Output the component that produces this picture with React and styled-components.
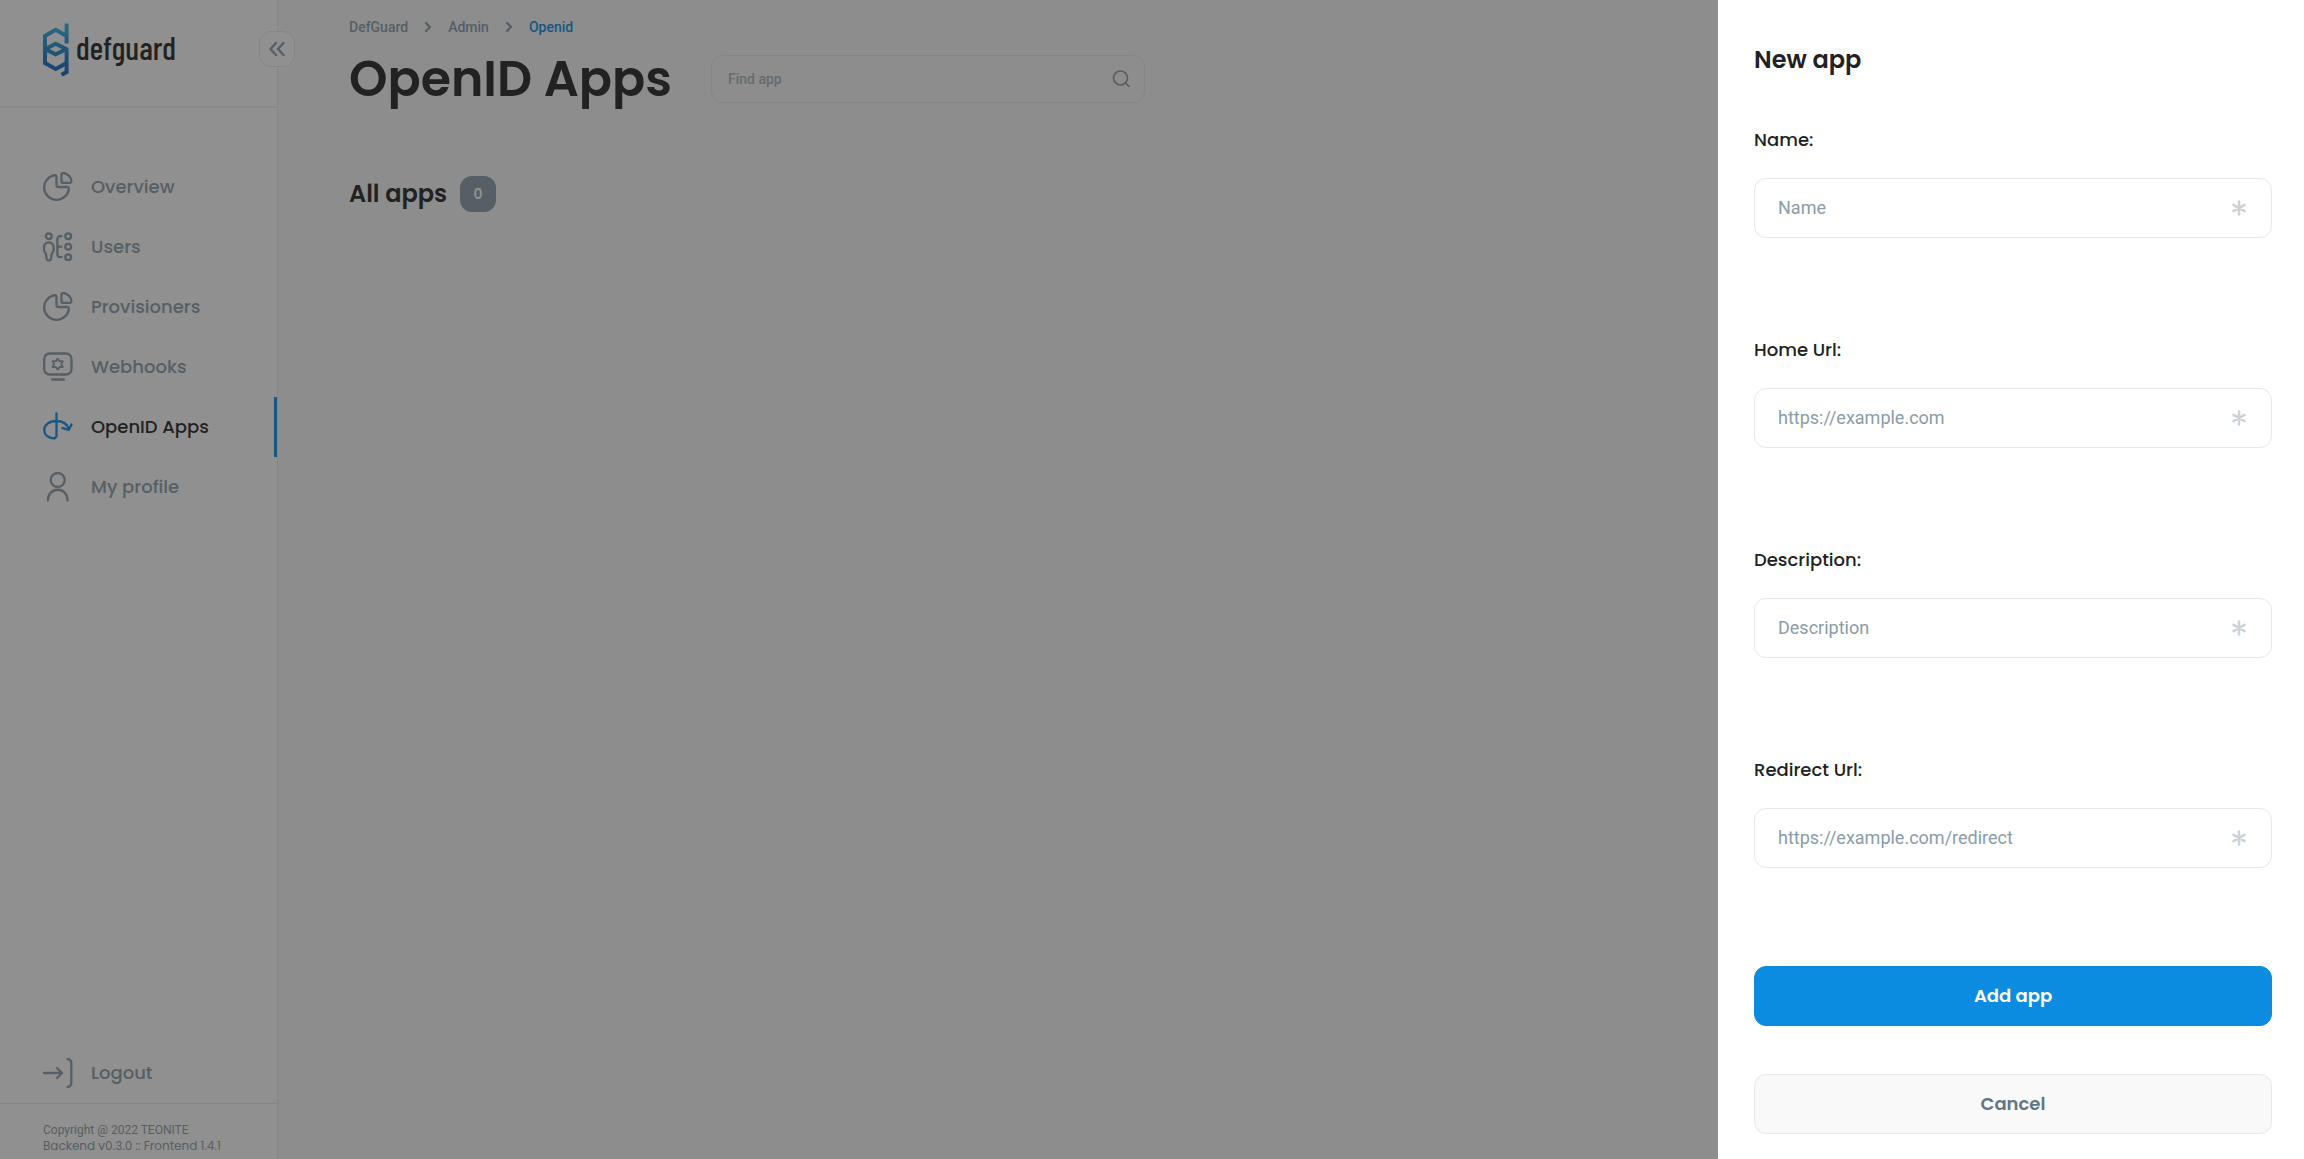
import React from 'react';
import styled, { createGlobalStyle } from 'styled-components';

const brand = `Poppins, Inter, 'Noto Sans', sans-serif`;
const body = `Roboto, 'Liberation Sans', sans-serif`;
const color = {
  text: '#222222',
  muted: '#899ca8',
  link: '#0c8ce0',
  line: '#e8e8e8',
  page: '#f9f9f9',
  secondary: '#617684',
};

const GlobalStyle = createGlobalStyle`
  *, *::before, *::after { box-sizing: border-box; }
  html, body, #root { height: 100%; }
  body { margin: 0; overflow: hidden; background: ${color.page}; color: ${color.text}; font-family: ${body}; }
  h1, h2, p, ul, ol { margin: 0; padding: 0; }
  ul, ol { list-style: none; }
  button, input { font: inherit; }
  svg { display: block; flex: none; }
`;

const Shell = styled.div`
  display: grid;
  grid-template-columns: 278px 1fr;
  height: 100vh;
`;

const Sidebar = styled.aside`
  position: relative;
  display: flex;
  flex-direction: column;
  background: #fff;
  border-right: 1px solid ${color.line};
`;

const Brand = styled.a`
  display: flex;
  align-items: center;
  gap: 7px;
  height: 108px;
  padding: 0 0 6px 43px;
  border-bottom: 2px solid #f0f0f0;
  text-decoration: none;
  color: ${color.text};
`;

const Wordmark = styled.span`
  padding-bottom: 6px;
  font: 500 32px/32px 'Barlow Condensed', Dosis, Rajdhani, 'Roboto Condensed', 'Open Sans Condensed', ${body};
`;

const CollapseButton = styled.button`
  position: absolute;
  top: 31px;
  right: -18px;
  display: grid;
  place-items: center;
  width: 36px;
  height: 36px;
  padding: 0;
  border: 1px solid ${color.line};
  border-radius: 12px;
  background: #fff;
  color: ${color.muted};
`;

const Nav = styled.nav`
  display: flex;
  flex-direction: column;
  flex: 1;
  padding-top: 49px;
`;

const NavLink = styled.a`
  display: flex;
  align-items: center;
  gap: 18px;
  height: 60px;
  padding-left: 43px;
  border-right: 3px solid ${(p) => (p.$active ? color.link : 'transparent')};
  font: 500 18px/24px ${brand};
  color: ${(p) => (p.$active ? color.text : color.muted)};
  text-decoration: none;
  svg { color: ${(p) => (p.$active ? color.link : color.muted)}; }
`;

const LogoutButton = styled.button`
  display: flex;
  align-items: center;
  gap: 18px;
  height: 60px;
  padding: 0 0 0 43px;
  border: 0;
  background: none;
  font: 500 18px/24px ${brand};
  color: ${color.muted};
`;

const SidebarFooter = styled.footer`
  padding: 18px 0 5px 43px;
  border-top: 1px solid ${color.line};
  font-size: 12px;
  line-height: 16px;
  color: ${color.muted};
`;

const Version = styled.p`
  font-family: ${brand};
`;

const Main = styled.main`
  padding: 18px 71px;
`;

const Breadcrumbs = styled.ol`
  display: flex;
  align-items: center;
  font-size: 14px;
  font-weight: 500;
  line-height: 18px;
`;

const Crumb = styled.li`
  display: flex;
  align-items: center;
  svg { margin: 0 14px; color: ${color.muted}; }
`;

const CrumbLink = styled.a`
  text-decoration: none;
  color: ${(p) => (p.$current ? color.link : color.muted)};
`;

const TitleRow = styled.div`
  display: flex;
  align-items: center;
  gap: 39px;
  margin-top: 7px;
`;

const PageTitle = styled.h1`
  font: 600 49px/72px ${brand};
`;

const SearchBox = styled.label`
  display: flex;
  align-items: center;
  width: 434px;
  height: 48px;
  padding: 0 14px 0 16px;
  border: 1px solid ${color.line};
  border-radius: 12px;
  color: ${color.muted};
`;

const SearchInput = styled.input`
  flex: 1;
  min-width: 0;
  padding: 0;
  border: 0;
  outline: 0;
  background: none;
  font: 500 14px/18px ${body};
  &::placeholder { color: #a6b4bd; opacity: 1; }
`;

const ListHeader = styled.div`
  display: flex;
  align-items: center;
  gap: 13px;
  margin-top: 61px;
`;

const ListTitle = styled.h2`
  font: 600 24px/36px ${brand};
`;

const CountBadge = styled.span`
  display: grid;
  place-items: center;
  width: 36px;
  height: 36px;
  border-radius: 12px;
  background: ${color.muted};
  color: #fff;
  font: 600 14px/18px ${brand};
`;

const Overlay = styled.div`
  position: fixed;
  inset: 0;
  display: flex;
  justify-content: flex-end;
  background: rgba(34, 34, 34, 0.5);
`;

const Panel = styled.section`
  width: 586px;
  padding: 42px 32px 26px 36px;
  overflow: hidden;
  background: #fff;
`;

const PanelTitle = styled.h2`
  font: 600 24px/36px ${brand};
`;

const Form = styled.form`
  display: flex;
  flex-direction: column;
  padding-top: 48px;
`;

const Field = styled.div`
  display: flex;
  flex-direction: column;
  gap: 24px;
  padding-bottom: 98px;
`;

const Label = styled.label`
  font: 500 18px/28px ${brand};
`;

const InputFrame = styled.div`
  display: flex;
  align-items: center;
  height: 60px;
  padding: 0 24px 0 23px;
  border: 1px solid ${color.line};
  border-radius: 12px;
  svg { color: #cbd3d8; }
`;

const TextInput = styled.input`
  flex: 1;
  min-width: 0;
  padding: 0;
  border: 0;
  outline: 0;
  background: none;
  font: 400 18px/24px ${body};
  &::placeholder { color: ${color.muted}; opacity: 1; }
`;

const Actions = styled.div`
  display: flex;
  flex-direction: column;
  gap: 48px;
`;

const Button = styled.button`
  height: 60px;
  border: 1px solid ${(p) => (p.$primary ? color.link : color.line)};
  border-radius: 12px;
  background: ${(p) => (p.$primary ? color.link : color.page)};
  color: ${(p) => (p.$primary ? '#fff' : color.secondary)};
  font: 600 18px/24px ${brand};
`;

const Icon = ({ size = 30, box = 30, width = 2.3, children }) => (
  <svg width={size} height={size} viewBox={`0 0 ${box} ${box}`} fill="none" stroke="currentColor"
    strokeWidth={width} strokeLinecap="round" strokeLinejoin="round" aria-hidden="true">
    {children}
  </svg>
);

const LogoMark = () => (
  <svg width="26" height="54" viewBox="0 0 26 54" fill="none" aria-hidden="true">
    <defs>
      <linearGradient id="mark" x1="13" y1="0" x2="13" y2="54" gradientUnits="userSpaceOnUse">
        <stop stopColor="#37b3e2" />
        <stop offset="1" stopColor="#0a5fb8" />
      </linearGradient>
    </defs>
    <g stroke="url(#mark)" strokeWidth="4">
      <path d="M23.600 0.500V20.500M23.600 13L12.700 6.800L2 13V40L12.700 46L23.600 40" />
      <path d="M2 26.300L12.700 20.800L23.600 26.300V49L18.500 51.800" />
      <path d="M2 26L12.700 31.200L23.600 26" />
    </g>
  </svg>
);

const PieIcon = () => (
  <Icon>
    <path d="M13.500 4.500V13a2 2 0 0 0 2 2H24.500a1.400 1.400 0 0 1 1.400 1.600A12.400 12.400 0 1 1 12 3.200a1.400 1.400 0 0 1 1.500 1.300Z" />
    <path d="M18.500 2.500a1.600 1.600 0 0 1 1.800-1.500A9.400 9.400 0 0 1 28.400 9a1.600 1.600 0 0 1-1.500 1.900H20a1.500 1.500 0 0 1-1.500-1.500Z" />
  </Icon>
);

const UsersIcon = () => (
  <Icon>
    <circle cx="5.800" cy="4.200" r="2.900" />
    <path d="M5.800 10.400A4.700 4.700 0 0 0 1 15.200V18c0 2 1.700 2.600 2 4.400l.6 4.600a1.400 1.400 0 0 0 1.400 1.300h1.700A1.400 1.400 0 0 0 8 27l.6-4.600c.3-1.800 2-2.400 2-4.400v-2.800a4.700 4.700 0 0 0-4.800-4.800Z" />
    <path d="M18.500 4.200H17a2.600 2.600 0 0 0-2.600 2.600v15.800A2.600 2.600 0 0 0 17 25.200h1.500M14.400 14.700h4.100" />
    <circle cx="25.200" cy="4.200" r="2.900" />
    <circle cx="25.200" cy="14.700" r="2.900" />
    <circle cx="25.200" cy="25.200" r="2.900" />
  </Icon>
);

const WebhookIcon = () => (
  <Icon>
    <rect x="1.200" y="1.500" width="27.300" height="21" rx="5.500" />
    <path d="M9 27.500h12" />
    <path d="M14.700 6.800L16.600 9.400L19.800 9.300L18.400 12.200L19.800 15.100L16.600 15L14.700 17.600L12.800 15L9.600 15.100L11 12.200L9.600 9.300L12.800 9.400Z" strokeWidth="1.900" />
  </Icon>
);

const OpenIdIcon = () => (
  <Icon>
    <path d="M13.500 1.500V23.500A3 3 0 0 1 10 26.400C5 25.600 1.200 22.600 1.200 18 1.200 12.800 6.200 9 13.500 9c5.500 0 10 2.200 12.200 7.500" />
    <path d="M19.500 16.200l6.300 1.600 2.700-5.300" />
  </Icon>
);

const ProfileIcon = () => (
  <Icon>
    <circle cx="14.700" cy="8" r="7" />
    <path d="M5 28.500V27.500A9.700 9.700 0 0 1 24.500 27.500V28.500" />
  </Icon>
);

const LogoutIcon = () => (
  <Icon>
    <path d="M1 15h18M14 10l5 5-5 5" />
    <path d="M24.500 1.200A3.500 3.500 0 0 1 28.300 4.700V25.300A3.500 3.500 0 0 1 24.500 28.800" />
  </Icon>
);

const navItems = [
  { label: 'Overview', icon: PieIcon },
  { label: 'Users', icon: UsersIcon },
  { label: 'Provisioners', icon: PieIcon },
  { label: 'Webhooks', icon: WebhookIcon },
  { label: 'OpenID Apps', icon: OpenIdIcon, active: true },
  { label: 'My profile', icon: ProfileIcon },
];

const crumbs = ['DefGuard', 'Admin', 'Openid'];

const fields = [
  { id: 'name', label: 'Name:', placeholder: 'Name' },
  { id: 'home-url', label: 'Home Url:', placeholder: 'https://example.com' },
  { id: 'description', label: 'Description:', placeholder: 'Description' },
  { id: 'redirect-url', label: 'Redirect Url:', placeholder: 'https://example.com/redirect' },
];

export default function App() {
  return (
    <>
      <GlobalStyle />
      <Shell>
        <Sidebar>
          <Brand href="#home"><LogoMark /><Wordmark>defguard</Wordmark></Brand>
          <CollapseButton type="button" aria-label="Collapse navigation">
            <Icon size={18} box={18} width={2.4}><path d="M8 3L2.500 9L8 15M15.500 3L10 9L15.500 15" /></Icon>
          </CollapseButton>
          <Nav>
            {navItems.map(({ label, icon: Glyph, active }) => (
              <NavLink key={label} href="#nav" $active={active}><Glyph />{label}</NavLink>
            ))}
          </Nav>
          <LogoutButton type="button"><LogoutIcon />Logout</LogoutButton>
          <SidebarFooter>
            <p>Copyright @ 2022 TEONITE</p>
            <Version>Backend v0.3.0 :: Frontend 1.4.1</Version>
          </SidebarFooter>
        </Sidebar>
        <Main>
          <Breadcrumbs>
            {crumbs.map((crumb, i) => (
              <Crumb key={crumb}>
                {i > 0 && <Icon size={12} box={12}><path d="M4 2L8 6L4 10" /></Icon>}
                <CrumbLink href="#crumb" $current={i === crumbs.length - 1}>{crumb}</CrumbLink>
              </Crumb>
            ))}
          </Breadcrumbs>
          <TitleRow>
            <PageTitle>OpenID Apps</PageTitle>
            <SearchBox>
              <SearchInput type="text" placeholder="Find app" aria-label="Find app" />
              <Icon size={18} box={18} width={1.7}><circle cx="8.500" cy="8" r="7" /><path d="M13.500 13l3.500 3.500" /></Icon>
            </SearchBox>
          </TitleRow>
          <ListHeader>
            <ListTitle>All apps</ListTitle>
            <CountBadge>0</CountBadge>
          </ListHeader>
        </Main>
      </Shell>
      <Overlay>
        <Panel role="dialog" aria-labelledby="panel-title">
          <PanelTitle id="panel-title">New app</PanelTitle>
          <Form>
            {fields.map((f) => (
              <Field key={f.id}>
                <Label htmlFor={f.id}>{f.label}</Label>
                <InputFrame>
                  <TextInput id={f.id} type="text" placeholder={f.placeholder} />
                  <Icon size={16} box={16} width={2.6}><path d="M8 1.500v13M2.500 4.800l11 6.400M13.500 4.800l-11 6.400" /></Icon>
                </InputFrame>
              </Field>
            ))}
            <Actions>
              <Button type="submit" $primary>Add app</Button>
              <Button type="button">Cancel</Button>
            </Actions>
          </Form>
        </Panel>
      </Overlay>
    </>
  );
}
